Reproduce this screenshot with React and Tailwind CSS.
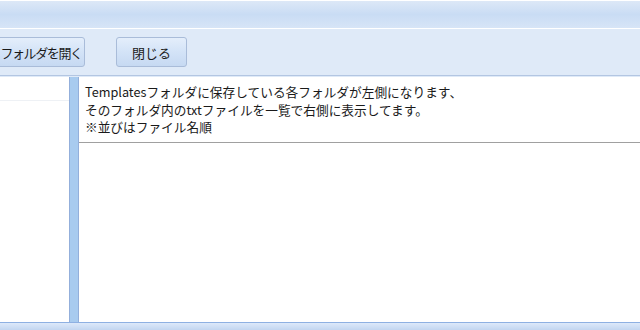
export default function App() {
  const font = { fontFamily: '"Noto Sans CJK JP", "Noto Sans", sans-serif' };
  return (
    <div className="w-[640px] h-[330px] flex flex-col bg-[#dfeaf8] overflow-hidden text-[#1a1a1a]" style={font}>
      {/* title strip */}
      <div className="h-[29px] shrink-0 border-t border-[#b4c4dc] bg-gradient-to-b from-[#dde8f7] via-[#c9dcf4] to-[#d7e5f7] border-b border-white" />
      {/* toolbar */}
      <div className="h-[47px] shrink-0 flex items-center gap-[31px] -ml-[3px] border-b border-[#b3c6e2]">
        <button className="h-[30px] w-[88px] whitespace-nowrap rounded-[3px] border border-[#a9bcd9] bg-gradient-to-b from-[#e4eefb] via-[#d3e3f7] to-[#c6d9f2] text-[13px] tracking-[-1.4px] leading-none pt-[1px]">
          フォルダを開く
        </button>
        <button className="h-[30px] w-[71px] rounded-[3px] border border-[#a9bcd9] bg-gradient-to-b from-[#e4eefb] via-[#d3e3f7] to-[#c6d9f2] text-[13px] leading-none pt-[1px]">
          閉じる
        </button>
      </div>
      {/* content */}
      <div className="flex-1 flex min-h-0 pt-px">
        <div className="w-[70px] bg-white border-r border-[#93afdb] flex flex-col">
          <div className="h-[24px] border-b border-[#eef1f5]" />
        </div>
        <div className="w-[8px] bg-[#a8cbef]" />
        <div className="flex-1 bg-white border-l border-[#93afdb] flex flex-col">
          <div className="h-[66px] border-b border-[#a0a0a0] pl-[6px] pt-[6px] text-[12.7px] leading-[17.5px]">
            <div>Templatesフォルダに保存している各フォルダが左側になります、</div>
            <div>そのフォルダ内のtxtファイルを一覧で右側に表示してます。</div>
            <div>※並びはファイル名順</div>
          </div>
        </div>
      </div>
      {/* status strip */}
      <div className="h-[8px] shrink-0 border-t border-[#8eb0e2] bg-gradient-to-b from-[#dde9fa] to-[#c3d6f0]" />
    </div>
  );
}
